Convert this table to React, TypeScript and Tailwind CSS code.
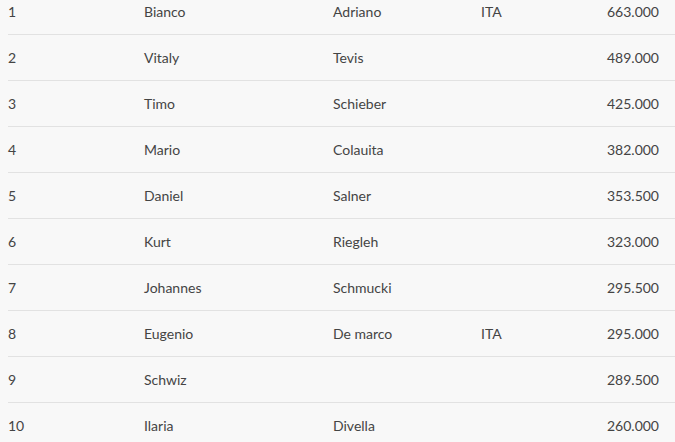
import React from 'react'

const rows = [
  { pos: '1', first: 'Bianco', last: 'Adriano', nat: 'ITA', pts: '663.000' },
  { pos: '2', first: 'Vitaly', last: 'Tevis', nat: '', pts: '489.000' },
  { pos: '3', first: 'Timo', last: 'Schieber', nat: '', pts: '425.000' },
  { pos: '4', first: 'Mario', last: 'Colauita', nat: '', pts: '382.000' },
  { pos: '5', first: 'Daniel', last: 'Salner', nat: '', pts: '353.500' },
  { pos: '6', first: 'Kurt', last: 'Riegleh', nat: '', pts: '323.000' },
  { pos: '7', first: 'Johannes', last: 'Schmucki', nat: '', pts: '295.500' },
  { pos: '8', first: 'Eugenio', last: 'De marco', nat: 'ITA', pts: '295.000' },
  { pos: '9', first: 'Schwiz', last: '', nat: '', pts: '289.500' },
  { pos: '10', first: 'Ilaria', last: 'Divella', nat: '', pts: '260.000' },
]

export default function App() {
  return (
    <div
      className="h-[442px] w-[675px] overflow-hidden bg-[#f8f8f8] text-[14px] text-[#444]"
      style={{ fontFamily: 'Lato, "Open Sans", sans-serif' }}
    >
      <div className="-mt-[12px] pl-[8px]">
        {rows.map((r, i) => (
          <div
            key={r.pos}
            className={
              'grid h-[46px] grid-cols-[136px_189px_148px_1fr_16px] items-center ' +
              (i > 0 ? 'border-t border-[#e2e2e2]' : '')
            }
          >
            <div>{r.pos}</div>
            <div>{r.first}</div>
            <div>{r.last}</div>
            <div className="flex justify-between">
              <span>{r.nat}</span>
              <span>{r.pts}</span>
            </div>
            <div />
          </div>
        ))}
      </div>
    </div>
  )
}
